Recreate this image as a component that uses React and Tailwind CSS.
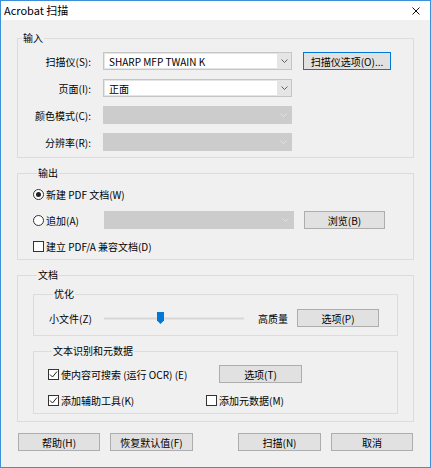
import React from 'react'

const font = { fontFamily: '"Noto Sans CJK SC", "Noto Sans", sans-serif' }

const Chevron = ({ color = '#606060' }) => (
  <svg width="7" height="4" viewBox="0 0 7 4" fill="none">
    <path d="M0.5 0.5 L3.5 3.5 L6.5 0.5" stroke={color} strokeWidth="1" />
  </svg>
)

const Select = ({ value, disabled, className = '' }) => {
  if (disabled) {
    return (
      <div className={`h-[18px] border border-[#cccccc] bg-[#cccccc] flex items-center justify-end pr-[4px] ${className}`}>
        <Chevron color="#e2e2e2" />
      </div>
    )
  }
  return (
    <div className={`h-[18px] border border-[#c5c5c5] bg-[#e5e5e5] flex ${className}`}>
      <div className="flex-1 bg-white m-[1px] mr-0 flex items-center pl-[4px] text-black">{value}</div>
      <div className="w-[14px] flex items-center justify-center">
        <Chevron />
      </div>
    </div>
  )
}

const Button = ({ children, className = '', primary }) => (
  <button
    className={`h-[18px] bg-[#e1e1e1] border ${primary ? 'border-[#0078d7]' : 'border-[#adadad]'} flex items-center justify-center text-black ${className}`}
  >
    {children}
  </button>
)

const Check = ({ checked }) => (
  <span className="w-[11px] h-[11px] border border-[#333333] bg-white flex items-center justify-center shrink-0">
    {checked && (
      <svg width="9" height="9" viewBox="0 0 9 9" fill="none">
        <path d="M1 4.5 L3.5 7 L8 1.5" stroke="#222" strokeWidth="1" />
      </svg>
    )}
  </span>
)

const Radio = ({ checked }) => (
  <span className="w-[11px] h-[11px] rounded-full border border-[#333333] bg-white flex items-center justify-center shrink-0">
    {checked && <span className="w-[5px] h-[5px] rounded-full bg-[#222]" />}
  </span>
)

const Group = ({ title, children, className = '' }) => (
  <fieldset className={`border border-[#dcdcdc] ${className}`}>
    <legend className="ml-[4px] px-[1px] leading-[14px]">{title}</legend>
    {children}
  </fieldset>
)

const FieldRow = ({ label, children }) => (
  <div className="flex items-center h-[18px]">
    <span className="w-[73px] text-right">{label}</span>
    <div className="ml-[12px] flex items-center">{children}</div>
  </div>
)

export default function App() {
  return (
    <div
      style={font}
      className="w-[431px] h-[468px] border border-[#3d8fd9] flex flex-col text-[10px] text-black overflow-hidden"
    >
      {/* title bar */}
      <div className="h-[19px] bg-white flex items-center justify-between pl-[3px] pr-[10px] text-[11px]">
        <span>Acrobat 扫描</span>
        <svg width="8" height="8" viewBox="0 0 8 8" fill="none">
          <path d="M0.5 0.5 L7.5 7.5 M7.5 0.5 L0.5 7.5" stroke="#111" strokeWidth="1" />
        </svg>
      </div>

      <div className="flex-1 bg-[#f0f0f0] px-[16px] flex flex-col">
        <Group title="输入" className="mt-[11px] pt-[7px] pb-[6px]">
          <div className="flex flex-col gap-[9px]">
            <FieldRow label="扫描仪(S):">
              <Select value="SHARP MFP TWAIN K" className="w-[189px]" />
              <Button primary className="w-[88px] ml-[11px]">扫描仪选项(O)...</Button>
            </FieldRow>
            <FieldRow label="页面(I):">
              <Select value="正面" className="w-[189px]" />
            </FieldRow>
            <FieldRow label="颜色模式(C):">
              <Select disabled className="w-[189px]" />
            </FieldRow>
            <FieldRow label="分辨率(R):">
              <Select disabled className="w-[189px]" />
            </FieldRow>
          </div>
        </Group>

        <Group title="输出" className="mt-[8px] pt-[7px] pb-[6px] pl-[15px]">
          <div className="flex flex-col gap-[10px]">
            <div className="flex items-center h-[14px] gap-[2px]">
              <Radio checked />
              <span>新建 PDF 文档(W)</span>
            </div>
            <div className="flex items-center h-[18px]">
              <div className="w-[71px] flex items-center gap-[2px]">
                <Radio />
                <span>追加(A)</span>
              </div>
              <Select disabled className="w-[190px]" />
              <Button className="w-[81px] ml-[10px]">浏览(B)</Button>
            </div>
            <div className="flex items-center h-[14px] gap-[2px]">
              <Check />
              <span>建立 PDF/A 兼容文档(D)</span>
            </div>
          </div>
        </Group>

        <Group title="文档" className="mt-[8px] pt-[5px] pb-[7px] pl-[15px] pr-[15px]">
          <Group title="优化" className="pt-[8px] pb-[8px] pl-[15px]">
            <div className="flex items-center h-[18px]">
              <span className="w-[55px]">小文件(Z)</span>
              <div className="w-[140px] h-[12px] relative flex items-center">
                <div className="w-full h-[3px] bg-[#d8d8d8] border-y border-[#e4e4e4]" />
                <svg className="absolute left-[53px] top-[0px]" width="7" height="12" viewBox="0 0 7 12">
                  <path d="M0 0 H7 V8.5 L3.5 12 L0 8.5 Z" fill="#0078d7" />
                </svg>
              </div>
              <span className="ml-[14px] w-[39px]">高质量</span>
              <Button className="w-[82px]">选项(P)</Button>
            </div>
          </Group>

          <Group title="文本识别和元数据" className="mt-[8px] pt-[7px] pb-[6px] pl-[14px]">
            <div className="flex flex-col gap-[10px]">
              <div className="flex items-center h-[18px]">
                <div className="w-[171px] flex items-center gap-[2px]">
                  <Check checked />
                  <span>使内容可搜索 (运行 OCR) (E)</span>
                </div>
                <Button className="w-[83px]">选项(T)</Button>
              </div>
              <div className="flex items-center h-[14px]">
                <div className="w-[158px] flex items-center gap-[2px]">
                  <Check checked />
                  <span>添加辅助工具(K)</span>
                </div>
                <div className="flex items-center gap-[2px]">
                  <Check />
                  <span>添加元数据(M)</span>
                </div>
              </div>
            </div>
          </Group>
        </Group>

        <div className="mt-[11px] flex items-center pl-[1px]">
          <Button className="w-[82px]">帮助(H)</Button>
          <Button className="w-[83px] ml-[10px]">恢复默认值(F)</Button>
          <Button className="w-[83px] ml-[45px]">扫描(N)</Button>
          <Button className="w-[82px] ml-[10px]">取消</Button>
        </div>
      </div>
    </div>
  )
}
